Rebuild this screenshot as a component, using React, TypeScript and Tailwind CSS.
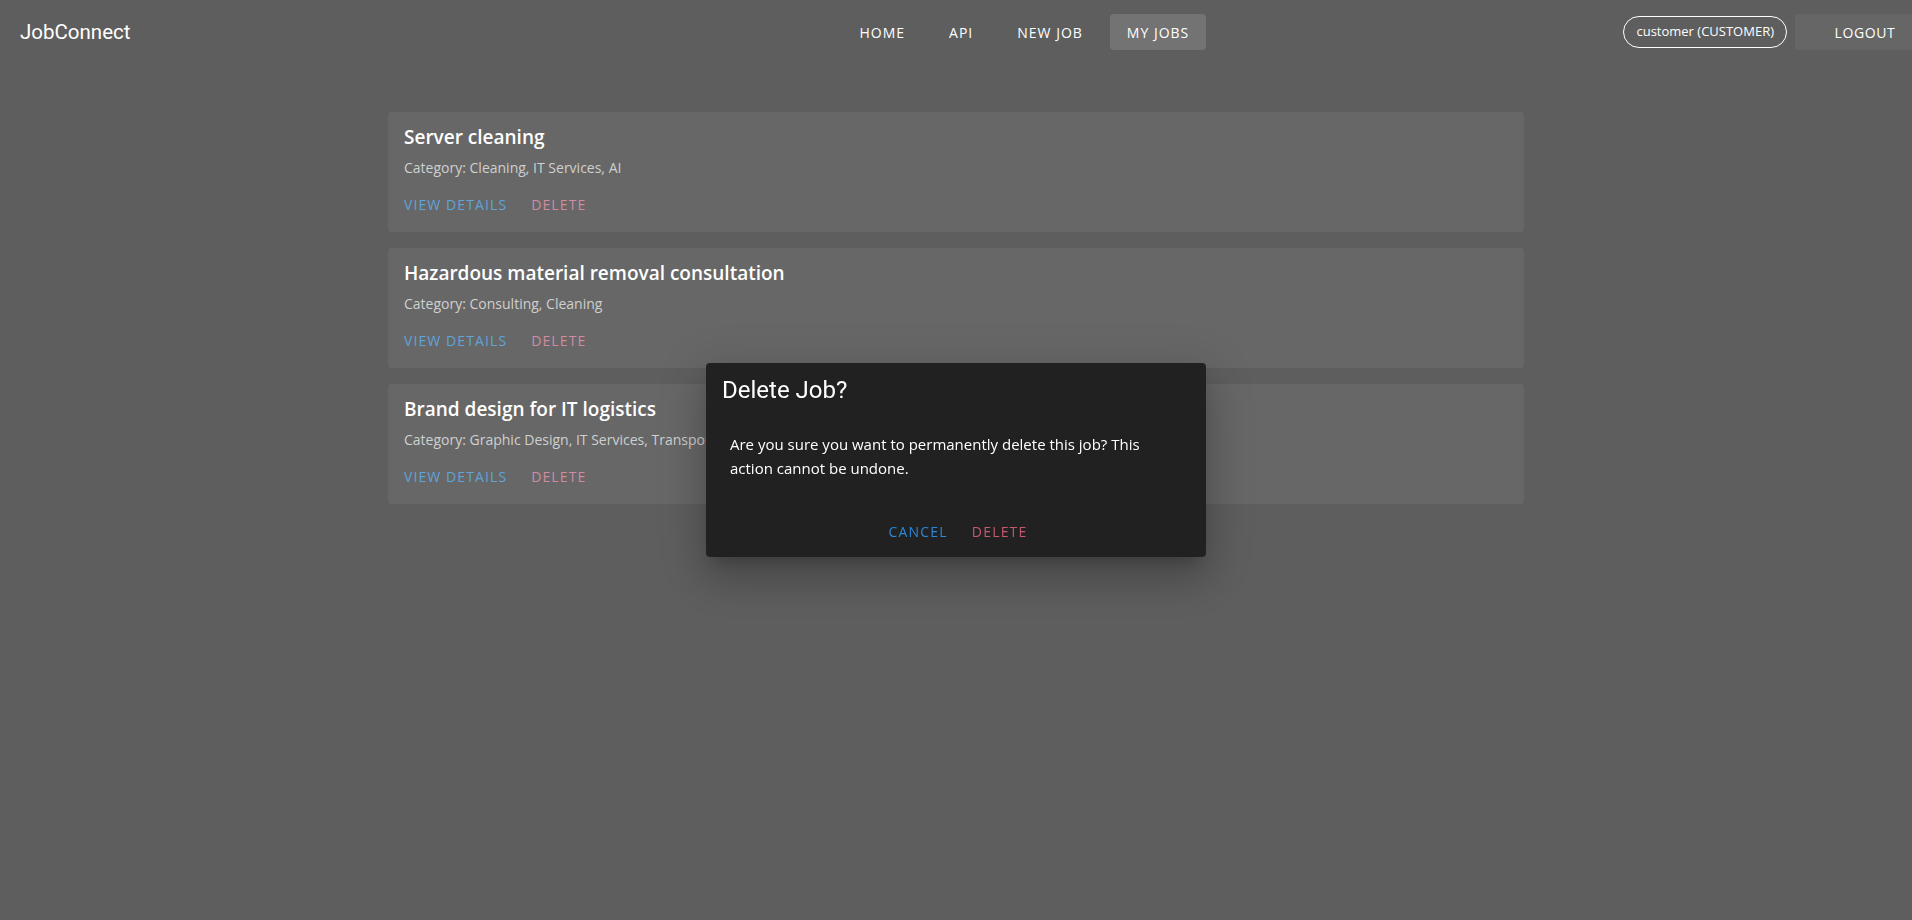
import React from "react";

const jobs = [
  { title: "Server cleaning", cat: "Category: Cleaning, IT Services, AI" },
  { title: "Hazardous material removal consultation", cat: "Category: Consulting, Cleaning" },
  { title: "Brand design for IT logistics", cat: "Category: Graphic Design, IT Services, Transportation" },
];

const sans = { fontFamily: '"Open Sans", "Noto Sans", sans-serif' };

export default function App() {
  return (
    <div className="relative min-h-[920px] w-full overflow-hidden bg-[#5e5e5e] text-white" style={sans}>
      <header className="flex h-16 items-center overflow-hidden pl-5">
        <div className="text-[20.5px] leading-none text-white" style={{ fontFamily: 'Roboto, sans-serif' }}>
          JobConnect
        </div>
        <nav className="ml-[712px] flex items-center gap-[10px]">
          {["HOME", "API", "NEW JOB", "MY JOBS"].map((n) => (
            <div
              key={n}
              className={
                "flex h-9 items-center rounded px-[17px] text-[14px] tracking-[1px] text-white " +
                (n === "MY JOBS" ? "bg-[#737373]" : "")
              }
            >
              {n}
            </div>
          ))}
        </nav>
        <div className="ml-auto mr-[-23px] flex items-center gap-2">
          <div className="flex h-8 items-center rounded-full border border-white px-[12px] text-[13px] text-white">
            customer (CUSTOMER)
          </div>
          <div className="flex h-9 w-[140px] items-center justify-center rounded bg-[#666666] text-[14px] tracking-[0.6px] text-white">
            LOGOUT
          </div>
        </div>
      </header>

      <main className="mx-auto mt-12 flex w-[1136px] flex-col gap-4">
        {jobs.map((j) => (
          <div key={j.title} className="h-[120px] rounded bg-[#676767] px-4 pt-[11px]">
            <div className="text-[19px] font-semibold leading-[28px] text-white">{j.title}</div>
            <div className="mt-[7px] text-[14px] leading-[20px] text-[#cfcfcf]">{j.cat}</div>
            <div className="mt-[16px] flex gap-[24px] text-[14px] tracking-[1.1px]">
              <span className="text-[#5fa3db]">VIEW DETAILS</span>
              <span className="text-[#d08ba0]">DELETE</span>
            </div>
          </div>
        ))}
      </main>

      <div className="fixed left-1/2 top-1/2 w-[500px] -translate-x-1/2 -translate-y-1/2 rounded bg-[#212121] shadow-[0_11px_15px_-7px_rgba(0,0,0,0.2),0_24px_38px_3px_rgba(0,0,0,0.14),0_9px_46px_8px_rgba(0,0,0,0.12)]">
        <div className="px-4 pt-[11px] text-[24px] leading-[32px] text-white" style={{ fontFamily: 'Roboto, sans-serif' }}>
          Delete Job?
        </div>
        <div className="mt-[26px] px-6 text-[15px] leading-[24px] text-white">
          Are you sure you want to permanently delete this job? This action cannot be undone.
        </div>
        <div className="mt-[41px] flex justify-center gap-[24px] pb-[15px] pl-[4px] text-[14px] tracking-[1.2px]">
          <span className="text-[#2a88d8]">CANCEL</span>
          <span className="text-[#c5586e]">DELETE</span>
        </div>
      </div>
    </div>
  );
}
